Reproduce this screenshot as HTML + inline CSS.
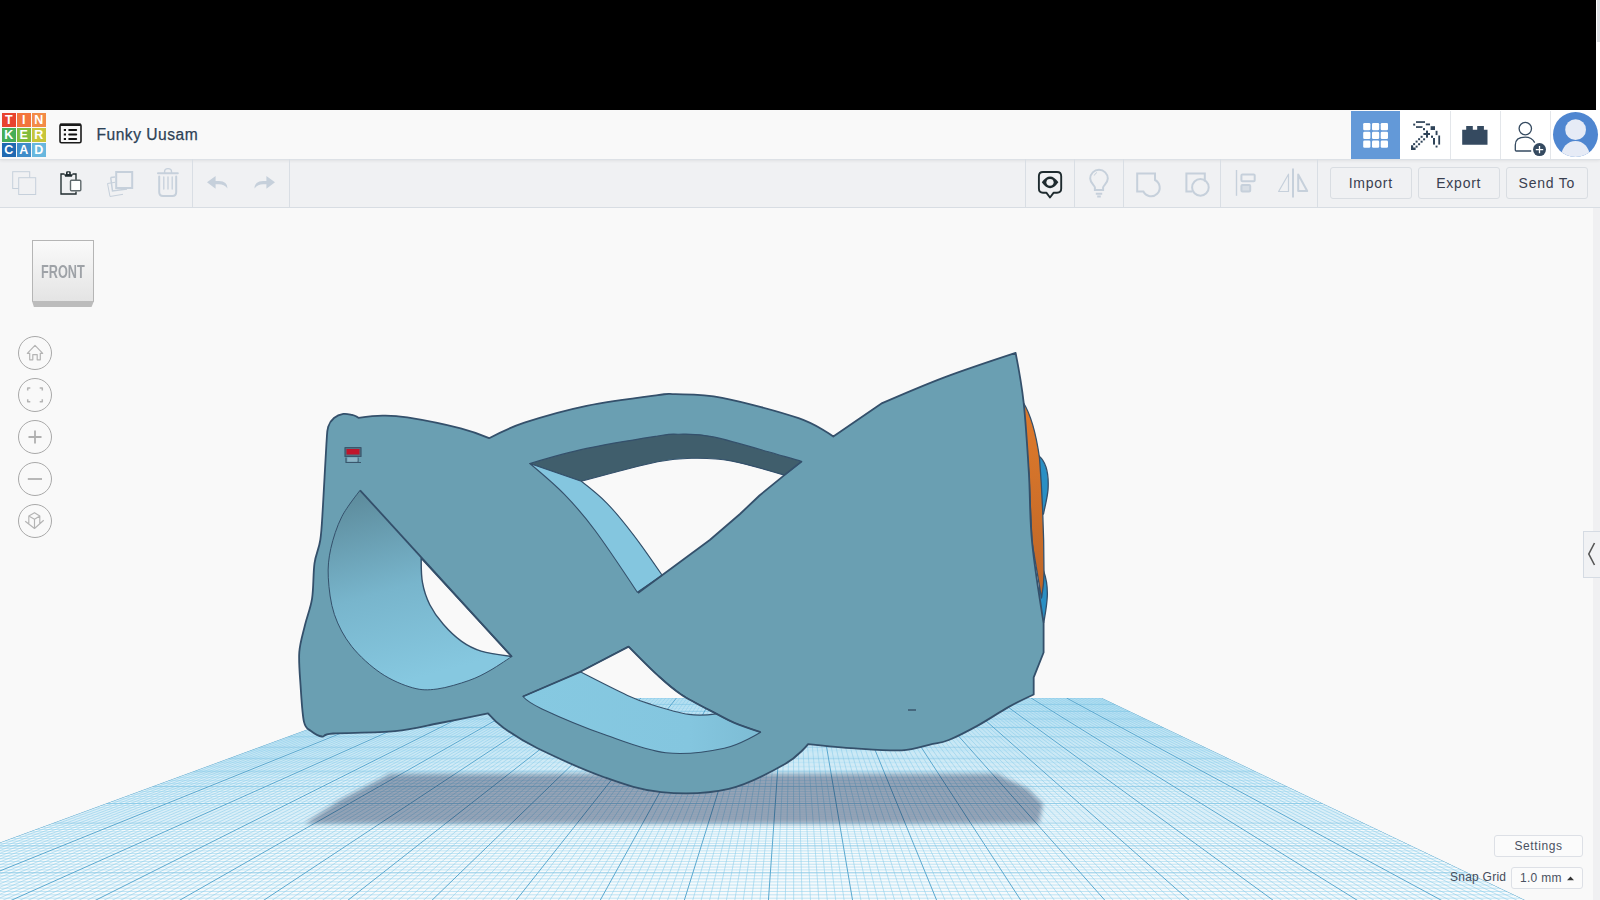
<!DOCTYPE html>
<html><head><meta charset="utf-8">
<style>
*{box-sizing:border-box;margin:0;padding:0}
html,body{width:1600px;height:900px;overflow:hidden;background:#f9f9f9;font-family:"Liberation Sans",sans-serif}
#top{position:absolute;left:0;top:0;width:1596px;height:110px;background:#000}
#sb{position:absolute;left:1596px;top:0;width:4px;height:110px;background:#fff}
#sbt{position:absolute;left:1597px;top:0;width:3px;height:42px;background:#dfe1e5}
#hdr{position:absolute;left:0;top:110px;width:1600px;height:50px;background:#f9f9f9;border-bottom:1px solid #dde1e6;box-shadow:0 1px 3px rgba(0,0,0,0.07)}
#hdrw{position:absolute;left:1400px;top:110px;width:200px;height:49px;background:#fff}
#tb{position:absolute;left:0;top:160px;width:1600px;height:48px;background:#f0f1f3;border-bottom:1px solid #d8dde3}
.abs{position:absolute}
.logo{position:absolute;left:2px;top:113px;width:44px;height:44px}
.tile{position:absolute;width:13.5px;height:13.5px;color:#fff;font:bold 12.5px/14px "Liberation Sans",sans-serif;text-align:center}
#title{position:absolute;left:96.5px;top:125px;font-size:15.6px;line-height:20px;color:#2d4256;letter-spacing:0.5px;-webkit-text-stroke:0.25px #2d4256}
.vdiv{position:absolute;top:159px;width:1px;height:48px;background:#d9dee4}
.hdiv{position:absolute;top:111px;width:1px;height:48px;background:#e3e6ea}
.btn{position:absolute;top:167px;height:32px;width:81.5px;border:1px solid #d9dde2;border-radius:3px;background:#f0f1f3;font-size:14px;color:#394050;text-align:center;line-height:31px;letter-spacing:0.75px}
.nav{position:absolute;left:18px;width:34px;height:34px;border:1px solid #a9a9a9;border-radius:50%;background:#f9f9f9}
#cube{position:absolute;left:32px;top:240px;width:62px;height:62px;border:1px solid #b5b5b5;background:linear-gradient(#fafafa,#e4e4e4)}
#cubesh{position:absolute;left:32px;top:301px;width:62px;height:6px;background:#bcbcbc;clip-path:polygon(0 0,100% 0,96% 100%,3% 100%)}
#cubetxt{position:absolute;left:41.2px;top:261.5px;font:bold 17.5px "Liberation Sans",sans-serif;color:#9ea2a7;transform-origin:0 0;transform:scaleX(0.725)}
#rstrip{position:absolute;left:1593px;top:208px;width:7px;height:692px;background:#f0f0f2}
#tab{position:absolute;left:1583px;top:531px;width:17px;height:47px;background:#f1f2f4;border:1px solid #d5dbe3;border-right:none}
#settings{position:absolute;left:1494px;top:835px;width:89px;height:22px;border:1px solid #dde0e6;border-radius:3px;background:#fbfbfb;font-size:12px;color:#4a5161;text-align:center;line-height:20px;letter-spacing:0.6px}
#snapbox{position:absolute;left:1511px;top:867px;width:72px;height:22px;border:1px solid #dde0e6;border-radius:3px;background:#fbfbfb;font-size:12px;color:#4a5161;line-height:20px;padding-left:8px;letter-spacing:0.3px}
#snaplbl{position:absolute;left:1450px;top:870px;font-size:12px;color:#454c5a;letter-spacing:0.25px}
</style></head><body>
<svg class="abs" style="left:0;top:0" width="1600" height="900" viewBox="0 0 1600 900">
<defs>
<clipPath id="gclip"><polygon points="392.7,698 1102,698 1535.5,905 -169.9,905"/></clipPath>
<filter id="blur3" x="-10%" y="-30%" width="120%" height="160%"><feGaussianBlur stdDeviation="2.2"/></filter>
<linearGradient id="cone" x1="0" y1="0" x2="0.25" y2="1"><stop offset="0" stop-color="#5a8797"/><stop offset="0.55" stop-color="#78b5cc"/><stop offset="1" stop-color="#86c8e0"/></linearGradient>
<linearGradient id="band2" x1="0" y1="0" x2="1" y2="0"><stop offset="0" stop-color="#86c9e1"/><stop offset="0.7" stop-color="#84c6df"/><stop offset="1" stop-color="#7dbcd4"/></linearGradient>
<linearGradient id="orng" x1="0" y1="0" x2="0" y2="1"><stop offset="0" stop-color="#e07b2c"/><stop offset="1" stop-color="#bd6527"/></linearGradient>
</defs>
<g id="grid" clip-path="url(#gclip)">
<polygon points="392.7,698 1102,698 1535.5,905 -169.9,905" fill="#f6fafc"/>
<path d="M391.18 698.56H1103.17M389.49 699.18H1104.48M387.78 699.81H1105.79M386.06 700.45H1107.12M384.32 701.08H1108.46M382.57 701.73H1109.81M380.80 702.38H1111.17M379.02 703.03H1112.54M377.23 703.70H1113.92M373.58 705.04H1116.73M371.74 705.71H1118.15M369.88 706.40H1119.59M368.00 707.09H1121.03M366.11 707.79H1122.49M364.20 708.49H1123.96M362.27 709.20H1125.45M360.32 709.92H1126.95M358.36 710.64H1128.46M354.38 712.10H1131.53M352.36 712.85H1133.08M350.33 713.60H1134.65M348.27 714.35H1136.23M346.20 715.11H1137.83M344.11 715.89H1139.45M341.99 716.66H1141.07M339.86 717.45H1142.72M337.71 718.24H1144.38M333.34 719.85H1147.74M331.12 720.66H1149.45M328.88 721.49H1151.18M326.62 722.32H1152.92M324.34 723.16H1154.68M322.04 724.01H1156.45M319.71 724.86H1158.24M317.36 725.73H1160.05M314.99 726.60H1161.88M310.17 728.37H1165.59M307.73 729.27H1167.48M305.26 730.18H1169.38M302.76 731.10H1171.31M300.24 732.03H1173.25M297.69 732.97H1175.21M295.12 733.91H1177.19M292.52 734.87H1179.20M289.89 735.84H1181.22M284.55 737.80H1185.34M281.84 738.80H1187.43M279.10 739.81H1189.54M276.33 740.83H1191.68M273.53 741.86H1193.83M270.69 742.90H1196.02M267.83 743.96H1198.22M264.94 745.02H1200.45M262.01 746.10H1202.71M256.06 748.29H1207.29M253.04 749.40H1209.62M249.98 750.53H1211.98M246.88 751.67H1214.37M243.75 752.82H1216.78M240.58 753.99H1219.22M237.38 755.17H1221.69M234.14 756.36H1224.18M230.86 757.56H1226.71M224.19 760.02H1231.85M220.79 761.27H1234.47M217.36 762.54H1237.12M213.88 763.82H1239.80M210.36 765.11H1242.51M206.79 766.42H1245.26M203.19 767.75H1248.04M199.53 769.10H1250.85M195.84 770.46H1253.70M188.30 773.23H1259.51M184.46 774.64H1262.47M180.57 776.08H1265.47M176.63 777.52H1268.50M172.64 778.99H1271.58M168.60 780.48H1274.69M164.51 781.99H1277.84M160.36 783.51H1281.04M156.15 785.06H1284.28M147.58 788.22H1290.89M143.20 789.83H1294.26M138.77 791.46H1297.68M134.27 793.12H1301.15M129.71 794.79H1304.66M125.09 796.50H1308.22M120.40 798.22H1311.83M115.65 799.97H1315.49M110.83 801.75H1319.21M100.98 805.37H1326.80M95.94 807.22H1330.68M90.84 809.10H1334.61M85.66 811.01H1338.61M80.40 812.94H1342.66M75.06 814.91H1346.77M69.64 816.90H1350.95M64.14 818.93H1355.19M58.56 820.98H1359.49M47.13 825.19H1368.30M41.28 827.34H1372.80M35.34 829.53H1377.38M29.30 831.75H1382.03M23.17 834.01H1386.76M16.93 836.30H1391.56M10.60 838.63H1396.44M4.16 841.00H1401.41M-2.38 843.41H1406.45M-15.81 848.35H1416.79M-22.69 850.89H1422.10M-29.69 853.46H1427.49M-36.81 856.08H1432.98M-44.06 858.75H1438.56M-51.43 861.46H1444.24M-58.93 864.23H1450.03M-66.57 867.04H1455.91M-74.35 869.90H1461.91M-90.33 875.78H1474.22M-98.55 878.81H1480.55M-106.92 881.89H1487.00M-115.44 885.03H1493.57M-124.13 888.22H1500.27M-132.99 891.48H1507.10M-142.02 894.81H1514.06M-151.23 898.20H1521.15M-160.63 901.65H1528.39" stroke="#8fd0ec" stroke-opacity="0.6" stroke-width="0.9" fill="none"/>
<path d="M396.25 698.0L-161.19 905M399.79 698.0L-152.66 905M403.34 698.0L-144.14 905M406.89 698.0L-135.61 905M410.43 698.0L-127.09 905M413.98 698.0L-118.56 905M417.53 698.0L-110.04 905M421.07 698.0L-101.51 905M424.62 698.0L-92.99 905M431.71 698.0L-75.93 905M435.26 698.0L-67.41 905M438.80 698.0L-58.88 905M442.35 698.0L-50.36 905M445.90 698.0L-41.83 905M449.44 698.0L-33.31 905M452.99 698.0L-24.78 905M456.54 698.0L-16.26 905M460.08 698.0L-7.73 905M467.18 698.0L9.32 905M470.72 698.0L17.85 905M474.27 698.0L26.37 905M477.82 698.0L34.90 905M481.36 698.0L43.42 905M484.91 698.0L51.95 905M488.46 698.0L60.47 905M492.00 698.0L69.00 905M495.55 698.0L77.53 905M502.64 698.0L94.58 905M506.19 698.0L103.10 905M509.73 698.0L111.63 905M513.28 698.0L120.15 905M516.83 698.0L128.68 905M520.37 698.0L137.20 905M523.92 698.0L145.73 905M527.47 698.0L154.26 905M531.01 698.0L162.78 905M538.11 698.0L179.83 905M541.65 698.0L188.36 905M545.20 698.0L196.88 905M548.75 698.0L205.41 905M552.29 698.0L213.93 905M555.84 698.0L222.46 905M559.39 698.0L230.99 905M562.93 698.0L239.51 905M566.48 698.0L248.04 905M573.57 698.0L265.09 905M577.12 698.0L273.61 905M580.66 698.0L282.14 905M584.21 698.0L290.66 905M587.76 698.0L299.19 905M591.30 698.0L307.72 905M594.85 698.0L316.24 905M598.40 698.0L324.77 905M601.94 698.0L333.29 905M609.04 698.0L350.34 905M612.58 698.0L358.87 905M616.13 698.0L367.39 905M619.68 698.0L375.92 905M623.22 698.0L384.45 905M626.77 698.0L392.97 905M630.32 698.0L401.50 905M633.86 698.0L410.02 905M637.41 698.0L418.55 905M644.50 698.0L435.60 905M648.05 698.0L444.12 905M651.59 698.0L452.65 905M655.14 698.0L461.18 905M658.69 698.0L469.70 905M662.23 698.0L478.23 905M665.78 698.0L486.75 905M669.33 698.0L495.28 905M672.87 698.0L503.80 905M679.97 698.0L520.85 905M683.51 698.0L529.38 905M687.06 698.0L537.91 905M690.61 698.0L546.43 905M694.15 698.0L554.96 905M697.70 698.0L563.48 905M701.25 698.0L572.01 905M704.79 698.0L580.53 905M708.34 698.0L589.06 905M715.43 698.0L606.11 905M718.98 698.0L614.64 905M722.52 698.0L623.16 905M726.07 698.0L631.69 905M729.62 698.0L640.21 905M733.16 698.0L648.74 905M736.71 698.0L657.26 905M740.26 698.0L665.79 905M743.80 698.0L674.31 905M750.90 698.0L691.36 905M754.44 698.0L699.89 905M757.99 698.0L708.42 905M761.54 698.0L716.94 905M765.08 698.0L725.47 905M768.63 698.0L733.99 905M772.18 698.0L742.52 905M775.72 698.0L751.04 905M779.27 698.0L759.57 905M786.36 698.0L776.62 905M789.91 698.0L785.15 905M793.45 698.0L793.67 905M797.00 698.0L802.20 905M800.55 698.0L810.72 905M804.09 698.0L819.25 905M807.64 698.0L827.77 905M811.19 698.0L836.30 905M814.73 698.0L844.82 905M821.83 698.0L861.88 905M825.37 698.0L870.40 905M828.92 698.0L878.93 905M832.47 698.0L887.45 905M836.01 698.0L895.98 905M839.56 698.0L904.50 905M843.11 698.0L913.03 905M846.65 698.0L921.55 905M850.20 698.0L930.08 905M857.29 698.0L947.13 905M860.84 698.0L955.66 905M864.38 698.0L964.18 905M867.93 698.0L972.71 905M871.48 698.0L981.23 905M875.02 698.0L989.76 905M878.57 698.0L998.28 905M882.12 698.0L1006.81 905M885.66 698.0L1015.34 905M892.76 698.0L1032.39 905M896.30 698.0L1040.91 905M899.85 698.0L1049.44 905M903.40 698.0L1057.96 905M906.94 698.0L1066.49 905M910.49 698.0L1075.01 905M914.04 698.0L1083.54 905M917.58 698.0L1092.07 905M921.13 698.0L1100.59 905M928.22 698.0L1117.64 905M931.77 698.0L1126.17 905M935.31 698.0L1134.69 905M938.86 698.0L1143.22 905M942.41 698.0L1151.74 905M945.95 698.0L1160.27 905M949.50 698.0L1168.80 905M953.05 698.0L1177.32 905M956.59 698.0L1185.85 905M963.69 698.0L1202.90 905M967.23 698.0L1211.42 905M970.78 698.0L1219.95 905M974.33 698.0L1228.47 905M977.87 698.0L1237.00 905M981.42 698.0L1245.53 905M984.97 698.0L1254.05 905M988.51 698.0L1262.58 905M992.06 698.0L1271.10 905M999.15 698.0L1288.15 905M1002.70 698.0L1296.68 905M1006.24 698.0L1305.20 905M1009.79 698.0L1313.73 905M1013.34 698.0L1322.26 905M1016.88 698.0L1330.78 905M1020.43 698.0L1339.31 905M1023.98 698.0L1347.83 905M1027.52 698.0L1356.36 905M1034.62 698.0L1373.41 905M1038.16 698.0L1381.93 905M1041.71 698.0L1390.46 905M1045.26 698.0L1398.98 905M1048.80 698.0L1407.51 905M1052.35 698.0L1416.04 905M1055.90 698.0L1424.56 905M1059.44 698.0L1433.09 905M1062.99 698.0L1441.61 905M1070.08 698.0L1458.66 905M1073.63 698.0L1467.19 905M1077.17 698.0L1475.71 905M1080.72 698.0L1484.24 905M1084.27 698.0L1492.77 905M1087.81 698.0L1501.29 905M1091.36 698.0L1509.82 905M1094.91 698.0L1518.34 905M1098.45 698.0L1526.87 905" stroke="#8cceea" stroke-opacity="0.65" stroke-width="0.9" fill="none"/>
<path d="M392.86 697.94H1101.88M375.41 704.36H1115.32M356.38 711.37H1129.99M335.53 719.04H1146.05M312.59 727.48H1163.73M287.24 736.82H1183.27M259.05 747.19H1204.99M227.55 758.79H1229.27M192.09 771.84H1256.59M151.89 786.63H1287.56M105.94 803.54H1322.98M52.89 823.07H1363.86M-9.04 845.86H1411.58M-82.27 872.81H1468.01" stroke="#84c7e5" stroke-width="0.9" fill="none"/>
<path d="M392.70 698.0L-169.71 905M428.16 698.0L-84.46 905M463.63 698.0L0.80 905M499.09 698.0L86.05 905M534.56 698.0L171.31 905M570.02 698.0L256.56 905M605.49 698.0L341.82 905M640.95 698.0L427.07 905M676.42 698.0L512.33 905M711.88 698.0L597.58 905M747.35 698.0L682.84 905M782.82 698.0L768.09 905M818.28 698.0L853.35 905M853.75 698.0L938.61 905M889.21 698.0L1023.86 905M924.67 698.0L1109.12 905M960.14 698.0L1194.37 905M995.61 698.0L1279.63 905M1031.07 698.0L1364.88 905M1066.54 698.0L1450.14 905M1102.00 698.0L1535.39 905" stroke="#5aa8cf" stroke-width="1" fill="none"/>
<polygon points="390,774 997,774 1028,789 1043,804 1039,823.5 305,823.5 340,800" fill="#aaadbb" filter="url(#blur3)" style="mix-blend-mode:multiply"/>
</g>
<g id="obj" stroke-linejoin="round">
<path d="M1039,456 C1046,462 1049,475 1048,490 C1047,500 1044.5,508 1043.5,514 L1038,514 Z M1043.6,571 C1046.5,579 1047.6,588 1047.3,596 C1046.9,606 1045,615 1043.8,622.5 L1037,600 Z" fill="#2a8fc4" stroke="#34506b" stroke-width="1.3"/>
<path d="M1023,402 C1033,418 1037,440 1039.5,458 C1042,490 1044,540 1044,573 C1044,585 1042.5,592 1041.5,598 L1032,542 L1028.9,473.3 Z" fill="url(#orng)" stroke="#34506b" stroke-width="1.3"/>
<path fill="#6a9fb2" stroke="#34506b" stroke-width="1.8" d="M328.2,426.7C329.5,422.3 331.5,420.1 334.0,418.0C336.5,415.9 340.3,414.4 343.3,413.9C346.3,413.4 349.8,414.4 352.0,414.8C354.2,415.2 356.5,416.5 356.5,416.5L358.4,417.8C358.4,417.8 374.2,415.7 382.4,415.6C390.5,415.5 394.2,415.3 407.3,417.4C420.4,419.5 447.1,424.9 460.7,428.4C474.3,431.9 489.1,438.2 489.1,438.2C489.1,438.2 508.1,428.1 524.4,422.7C540.6,417.3 564.4,410.4 586.6,405.8C608.8,401.2 642.9,397.0 657.7,395.1C672.5,393.2 664.8,393.8 675.5,394.2C686.2,394.6 701.7,393.8 722.2,397.8C742.7,401.8 780.1,411.8 798.6,418.2C817.1,424.6 833.3,436.5 833.3,436.5L882.2,403.1C882.2,403.1 922.2,385.7 944.4,377.3C966.6,368.9 1015.6,352.8 1015.6,352.8C1015.6,352.8 1021.4,382.1 1023.6,402.2C1025.8,422.3 1027.5,450.0 1028.9,473.3C1030.3,496.6 1029.6,517.2 1032.1,542.2C1034.5,567.2 1043.6,623.0 1043.6,623.0L1043.6,652.5L1033.7,677.4L1033.7,694.5C1033.7,694.5 1018.1,701.7 1008.8,706.9C999.5,712.1 987.7,720.1 977.7,725.6C967.7,731.1 956.7,736.8 948.8,740.0C940.8,743.2 937.8,742.9 930.0,744.6C922.2,746.3 914.4,749.7 901.9,750.3C889.4,750.9 870.6,749.4 855.0,748.4C839.4,747.4 808.1,744.1 808.1,744.1C808.1,744.1 798.2,756.5 785.0,764.0C771.8,771.5 749.4,784.1 728.8,788.8C708.2,793.5 681.9,794.0 661.3,792.1C640.7,790.2 625.6,784.8 605.0,777.5C584.4,770.2 554.4,756.5 537.5,748.3C520.6,740.0 512.0,733.8 503.8,728.0C495.6,722.2 488.0,713.4 488.0,713.4C488.0,713.4 455.5,720.0 440.0,723.0C424.5,726.0 412.8,729.4 395.0,731.1C377.2,732.9 345.3,732.6 333.1,733.5C320.9,734.4 325.7,736.9 322.0,736.5C318.3,736.1 314.0,733.4 311.0,731.0C308.0,728.6 305.8,729.6 304.0,721.9C302.2,714.2 301.3,696.2 300.5,684.6C299.7,673.0 298.6,661.9 299.3,652.0C300.1,642.1 302.9,634.0 305.0,625.0C307.1,616.0 310.5,608.6 312.1,598.3C313.7,588.0 313.1,573.0 314.5,563.3C315.9,553.6 318.9,549.4 320.3,540.0C321.7,530.6 321.9,522.6 322.9,506.7C323.9,490.8 325.5,457.7 326.4,444.4C327.3,431.1 326.9,431.1 328.2,426.7Z"/>
<path fill="url(#cone)" stroke="#34506b" stroke-width="1" d="M360.1,490.3L511.7,656.5C511.7,656.5 497.1,666.5 490.0,670.5C482.9,674.5 477.7,677.4 468.9,680.5C460.1,683.6 446.5,687.8 437.1,689.0C427.7,690.2 422.1,690.4 412.7,687.8C403.3,685.2 391.1,680.1 380.9,673.2C370.7,666.3 359.4,656.1 351.6,646.3C343.9,636.5 338.3,625.9 334.4,614.5C330.5,603.1 328.9,588.8 328.3,577.8C327.7,566.8 328.6,558.7 330.8,548.5C333.1,538.3 336.9,526.4 341.8,516.7C346.7,507.0 360.1,490.3 360.1,490.3Z"/>
<path fill="#f9f9f9" stroke="#34506b" stroke-width="1.4" d="M421.2,558.2L511.7,656.5C511.7,656.5 489.5,653.6 481.1,651.1C472.8,648.6 467.9,645.9 461.6,641.4C455.3,636.9 448.6,630.4 443.3,624.3C438.0,618.2 433.3,611.6 429.8,604.7C426.3,597.8 423.9,590.5 422.5,582.7C421.1,575.0 421.2,558.2 421.2,558.2Z"/>
<path fill="none" stroke="#34506b" stroke-width="1.8" d="M360.1,490.3 L511.7,656.5"/>
<path fill="#f9f9f9" d="M581.3,481.3C581.3,481.3 607.3,473.3 620.0,470.0C632.7,466.7 645.1,463.7 657.7,461.7C670.3,459.7 683.3,458.3 695.5,458.2C707.7,458.1 716.3,458.1 731.1,460.9C745.9,463.7 784.4,475.1 784.4,475.1C784.4,475.1 766.9,489.0 759.5,495.5C752.1,502.0 748.3,506.6 740.0,514.0C731.7,521.4 722.8,529.8 709.8,540.0C696.8,550.2 662.2,575.3 662.2,575.3C662.2,575.3 643.0,547.3 633.8,535.3C624.6,523.3 615.8,512.3 607.0,503.3C598.2,494.3 581.3,481.3 581.3,481.3Z"/>
<path fill="#405e6c" stroke="#34506b" stroke-width="1.1" d="M529.8,463.5C529.8,463.5 565.3,453.0 586.6,448.4C607.9,443.8 642.5,438.4 657.7,436.0C672.9,433.6 668.5,434.1 677.8,434.2C687.1,434.3 695.5,433.2 713.3,436.9C731.1,440.6 769.6,452.3 784.4,456.4C799.1,460.5 801.8,461.4 801.8,461.4L784.4,475.1C784.4,475.1 745.9,463.7 731.1,460.9C716.3,458.1 707.7,458.1 695.5,458.2C683.3,458.3 676.7,457.8 657.7,461.7C638.7,465.6 581.3,481.3 581.3,481.3L529.8,463.5Z"/>
<path fill="#84c6df" stroke="#34506b" stroke-width="1.1" d="M529.8,463.5L581.3,481.3C581.3,481.3 598.2,494.3 607.0,503.3C615.8,512.3 624.6,523.3 633.8,535.3C643.0,547.3 662.2,575.3 662.2,575.3L637.3,592.2C637.3,592.2 606.9,546.3 594.7,530.0C582.6,513.7 575.2,505.5 564.4,494.4C553.6,483.3 529.8,463.5 529.8,463.5Z"/>
<path fill="none" stroke="#34506b" stroke-width="1.8" d="M801.8,461.4 L784.4,475.1 L759.5,495.5 L740,514 L709.8,540 L638,593"/>
<path fill="url(#band2)" stroke="#34506b" stroke-width="1.1" d="M628.6,646.6C628.6,646.6 648.0,666.4 656.7,674.4C665.5,682.4 671.1,687.8 681.1,694.4C691.1,701.0 707.8,709.2 716.7,713.9C725.6,718.6 727.1,719.8 734.4,722.8C741.7,725.8 760.6,732.2 760.6,732.2C760.6,732.2 740.1,744.9 724.3,748.3C708.5,751.7 685.7,755.0 665.8,752.8C645.9,750.5 625.6,742.1 605.0,734.8C584.4,727.5 555.7,715.3 542.0,708.9C528.3,702.5 522.9,696.5 522.9,696.5L580.3,671.8L628.6,646.6Z"/>
<clipPath id="hole3"><path d="M628.6,646.6C628.6,646.6 648.0,666.4 656.7,674.4C665.5,682.4 671.1,687.8 681.1,694.4C691.1,701.0 716.7,713.9 716.7,713.9C716.7,713.9 699.8,716.0 688.9,714.4C678.0,712.8 661.3,707.6 651.1,704.4C640.9,701.2 639.3,700.8 627.5,695.4C615.7,690.0 580.3,671.8 580.3,671.8L628.6,646.6Z"/></clipPath><path fill="#f9f9f9" d="M628.6,646.6C628.6,646.6 648.0,666.4 656.7,674.4C665.5,682.4 671.1,687.8 681.1,694.4C691.1,701.0 716.7,713.9 716.7,713.9C716.7,713.9 699.8,716.0 688.9,714.4C678.0,712.8 661.3,707.6 651.1,704.4C640.9,701.2 639.3,700.8 627.5,695.4C615.7,690.0 580.3,671.8 580.3,671.8L628.6,646.6Z"/><use href="#grid" clip-path="url(#hole3)"/><path fill="none" stroke="#34506b" stroke-width="1.1" d="M628.6,646.6C628.6,646.6 648.0,666.4 656.7,674.4C665.5,682.4 671.1,687.8 681.1,694.4C691.1,701.0 716.7,713.9 716.7,713.9C716.7,713.9 699.8,716.0 688.9,714.4C678.0,712.8 661.3,707.6 651.1,704.4C640.9,701.2 639.3,700.8 627.5,695.4C615.7,690.0 580.3,671.8 580.3,671.8L628.6,646.6Z"/>
<path fill="none" stroke="#34506b" stroke-width="1.8" d="M522.9,696.5L580.3,671.8L628.6,646.6C628.6,646.6 648.0,666.4 656.7,674.4C665.5,682.4 671.1,687.8 681.1,694.4C691.1,701.0 707.8,709.2 716.7,713.9C725.6,718.6 727.1,719.8 734.4,722.8C741.7,725.8 760.6,732.2 760.6,732.2"/>
<rect x="345" y="447.5" width="16" height="9" fill="#4f6f80" stroke="#3a566c" stroke-width="1.2"/>
<rect x="346.5" y="449" width="13" height="5.5" fill="#c0142a"/>
<path d="M346,457.5 V462.5 H361 M358,457.5 V462" fill="none" stroke="#3a566c" stroke-width="1.2"/>
<rect x="347.5" y="457.5" width="10" height="4" fill="#8db3c4"/>
<path d="M908,710 h8" stroke="#3a566c" stroke-width="1.5"/>
</g>
</svg>
<div id="top"></div><div id="sb"></div><div id="sbt"></div>
<div id="tb"></div>
<div id="hdr"></div><div id="hdrw"></div>
<div class="logo">
 <div class="tile" style="left:0;top:0;background:#e8432e">T</div>
 <div class="tile" style="left:15px;top:0;background:#f3743c">I</div>
 <div class="tile" style="left:30px;top:0;background:#f38b47">N</div>
 <div class="tile" style="left:0;top:15px;background:#46ad57">K</div>
 <div class="tile" style="left:15px;top:15px;background:#81bb3b">E</div>
 <div class="tile" style="left:30px;top:15px;background:#c7c53a">R</div>
 <div class="tile" style="left:0;top:30px;background:#1f69b1">C</div>
 <div class="tile" style="left:15px;top:30px;background:#3f8dc9">A</div>
 <div class="tile" style="left:30px;top:30px;background:#68b7de">D</div>
</div>
<div id="title">Funky Uusam</div>
<div class="vdiv" style="left:192px"></div>
<div class="vdiv" style="left:289px"></div>
<div class="vdiv" style="left:1025px"></div>
<div class="vdiv" style="left:1074px"></div>
<div class="vdiv" style="left:1123px"></div>
<div class="vdiv" style="left:1220px"></div>
<div class="vdiv" style="left:1317px"></div>
<div class="abs" style="left:1351px;top:111px;width:49px;height:48px;background:#6399d8"></div>
<div class="hdiv" style="left:1450px"></div>
<div class="hdiv" style="left:1500px"></div>
<div class="hdiv" style="left:1550px"></div>
<div class="btn" style="left:1330px">Import</div>
<div class="btn" style="left:1418px">Export</div>
<div class="btn" style="left:1506px">Send To</div>
<div id="cube"></div><div id="cubesh"></div><div id="cubetxt">FRONT</div>
<div class="nav" style="top:336px"></div>
<div class="nav" style="top:378px"></div>
<div class="nav" style="top:420px"></div>
<div class="nav" style="top:462px"></div>
<div class="nav" style="top:504px"></div>
<div id="rstrip"></div>
<div id="tab"></div>
<div id="settings">Settings</div>
<div id="snaplbl">Snap Grid</div>
<div id="snapbox">1.0 mm</div>
<svg class="abs" style="left:0;top:0;pointer-events:none" width="1600" height="900" viewBox="0 0 1600 900">
<!-- right header cells white bg -->
<!-- list icon -->
<g fill="none" stroke="#1b1b1b">
 <rect x="60" y="124.2" width="21" height="18.6" rx="1.5" stroke-width="1.6"/>
 <path d="M60 124.8H81" stroke-width="2.4"/>
</g>
<g fill="#111">
 <rect x="63.8" y="129" width="2.2" height="2"/><rect x="63.8" y="133.5" width="2.2" height="2"/><rect x="63.8" y="138" width="2.2" height="2"/>
 <rect x="68.2" y="129" width="9" height="2" rx="1"/><rect x="68.2" y="133.5" width="9" height="2" rx="1"/><rect x="68.2" y="138" width="9" height="2" rx="1"/>
</g>
<!-- copy -->
<g fill="#f0f1f3" stroke="#c6d0db" stroke-width="1">
 <rect x="12.7" y="171.7" width="17" height="16.8"/>
 <rect x="18.7" y="177.7" width="17" height="16.8"/>
</g>
<!-- paste -->
<g fill="none" stroke="#1f2b2f" stroke-width="1.35">
 <path d="M64.5 174H61V194H76V191.5M76 180V174H72.5"/>
</g>
<path d="M64 174.2 H73 L71.8 176.8 H65.2 Z" fill="#1f2b2f"/>
<path d="M66 175 V172.6 Q66 171.2 67.4 171.2 H69.4 Q70.8 171.2 70.8 172.6 V175 Z" fill="#1f2b2f"/>
<circle cx="68.4" cy="173.2" r="0.9" fill="#f0f1f3"/>
<rect x="70.5" y="180.2" width="10.3" height="10.6" rx="1" fill="#fff" stroke="#5e686b" stroke-width="1.4"/>
<!-- duplicate -->
<g fill="none" stroke="#c6d0db">
 <path d="M107.5 183.5 L115 182.3 M107.5 183.5 L110 196.5 L123 194.3" stroke-width="1"/>
 <path d="M110.7 177.5 L115 176.9 M110.7 177.5 L112.5 191 L127 188.9" stroke-width="1.5"/>
 <rect x="116.2" y="172" width="16" height="16" stroke-width="2"/>
</g>
<!-- trash -->
<g fill="none" stroke="#c6d0db" stroke-width="2" stroke-linecap="round">
 <path d="M158 173.2H177.8"/>
 <path d="M164.6 173 V171.5 Q164.6 168.6 168 168.6 Q171.5 168.6 171.5 171.5 V173" stroke-width="1.4"/>
 <path d="M159.2 176.5 V192 Q159.2 196 163 196 H172.5 Q176.2 196 176.2 192 V176.5"/>
 <path d="M163.8 177 V189 M168 177 V189 M172.2 177 V189" stroke-width="1.3"/>
</g>
<!-- undo / redo -->
<g fill="#c6d0db">
 <path d="M207 182.3 L215.6 176 V181 H219 Q227.5 181 227.5 188.5 Q224 184.3 219 184.3 H215.6 V188.8 Z"/>
 <path d="M275 182.3 L266.4 176 V181 H263 Q254.5 181 254.5 188.5 Q258 184.3 263 184.3 H266.4 V188.8 Z"/>
</g>
<!-- eye bubble -->
<g fill="none" stroke="#1f2b2f" stroke-width="1.9" stroke-linejoin="round">
 <path d="M1043 172 H1057 Q1061.2 172 1061.2 176.2 V188.5 Q1061.2 192.7 1057 192.7 H1053.7 L1050 197.5 L1046.3 192.7 H1043 Q1038.9 192.7 1038.9 188.5 V176.2 Q1038.9 172 1043 172 Z"/>
</g>
<path d="M1041.8 182.3 Q1050 170.5 1058.4 182.3 Q1050 194 1041.8 182.3 Z" fill="#1f2b2f"/>
<ellipse cx="1050" cy="182.3" rx="3.6" ry="3.4" fill="#f0f1f3"/>
<!-- bulb -->
<g fill="none" stroke="#c6d0db" stroke-width="2">
 <path d="M1094.9 190 V187.6 C1094.9 185.6 1090.2 183.2 1090.2 178.6 A8.8 8.8 0 0 1 1107.8 178.6 C1107.8 183.2 1103.1 185.6 1103.1 187.6 V190 Z"/>
 <path d="M1095.8 193.8 H1102.2 M1097.2 196.6 H1100.8"/>
 <path d="M1094.3 175.5 Q1095 173.3 1097 172.5" stroke-width="1"/>
</g>
<!-- group / ungroup -->
<g fill="none" stroke="#c6d0db" stroke-width="2">
 <path d="M1155 180 V173.4 H1137.2 V191.5 H1143.4 A8.6 8.6 0 1 0 1155 180 Z"/>
 <path d="M1204.8 181.5 V173.4 H1186.4 V191.5 H1192.5"/>
 <circle cx="1200.4" cy="187.4" r="8.3"/>
</g>
<!-- align -->
<g fill="none" stroke="#c6d0db">
 <path d="M1236.5 170 V195.8" stroke-width="1.4"/>
 <rect x="1241.4" y="174.6" width="13.3" height="6.6" rx="1" stroke-width="2"/>
 <rect x="1241.4" y="185.1" width="8.8" height="6.3" rx="1" stroke-width="2" fill="#d8dee5"/>
</g>
<!-- mirror -->
<g fill="none" stroke="#c6d0db" stroke-linejoin="round">
 <path d="M1293 168.6 V197.6" stroke-width="2"/>
 <path d="M1288.5 174.2 L1278.6 191.5 H1288.5 Z" stroke-width="1.2"/>
 <path d="M1298.2 174.5 L1307.2 191 H1298.2 Z" stroke-width="2"/>
</g>
<!-- grid icon white -->
<g fill="#fff">
 <rect x="1363.2" y="123" width="7.2" height="7.3" rx="1.3"/><rect x="1372" y="123" width="7.2" height="7.3" rx="1.3"/><rect x="1380.7" y="123" width="7.3" height="7.3" rx="1.3"/>
 <rect x="1363.2" y="131.8" width="7.2" height="7.2" rx="1.3"/><rect x="1372" y="131.8" width="7.2" height="7.2" rx="1.3"/><rect x="1380.7" y="131.8" width="7.3" height="7.2" rx="1.3"/>
 <rect x="1363.2" y="140.5" width="7.2" height="7.3" rx="1.3"/><rect x="1372" y="140.5" width="7.2" height="7.3" rx="1.3"/><rect x="1380.7" y="140.5" width="7.3" height="7.3" rx="1.3"/>
</g>
<!-- pickaxe -->
<g fill="#2f4358">
<rect x="1416" y="121.2" width="9" height="1.7"/><rect x="1413.2" y="123.6" width="2" height="2"/><rect x="1416" y="126.2" width="6.5" height="1.7"/><rect x="1425.8" y="123.5" width="4.2" height="1.8"/><rect x="1430.6" y="126.2" width="4.4" height="3.8"/><rect x="1423" y="128.1" width="2" height="2.1"/><rect x="1423.4" y="133" width="6.6" height="2"/><rect x="1426" y="130.6" width="2" height="7.1"/><rect x="1431" y="135.6" width="2" height="2.2"/><rect x="1435.6" y="130.8" width="1.9" height="4.3"/><rect x="1438.3" y="135.5" width="1.8" height="9.1"/><rect x="1433" y="138" width="2" height="6.6"/><rect x="1435.6" y="145.6" width="1.9" height="1.9"/><rect x="1420.6" y="135.8" width="2" height="2"/><rect x="1418.1" y="138.2" width="2" height="2"/><rect x="1415.6" y="140.6" width="2" height="2"/><rect x="1413.1" y="143.1" width="2" height="2"/><rect x="1423.1" y="138.3" width="2" height="2"/><rect x="1420.6" y="140.7" width="2" height="2"/><rect x="1418.1" y="143.2" width="2" height="2"/><rect x="1415.6" y="145.6" width="2" height="2"/><path d="M1411 145.2 H1413.2 V147.6 H1415.6 V150 H1411 Z"/>
</g>
<!-- brick -->
<path d="M1462.2 129.8 H1466.2 V126 H1472.8 V129.8 H1477.2 V126 H1483.9 V129.8 H1487.5 V144.8 H1462.2 Z" fill="#354a60"/>
<!-- user add -->
<g fill="none" stroke="#354a60" stroke-width="1.3">
 <circle cx="1525.3" cy="128.6" r="6.2"/>
 <path d="M1531.2 151 H1516.3 Q1515.3 151 1515.3 150 V145 Q1515.3 137.2 1525.3 137.2 Q1531.7 137.2 1534.7 142.6"/>
</g>
<circle cx="1539.5" cy="149.6" r="6.5" fill="#354a60"/>
<path d="M1539.5 146 V153.3 M1535.8 149.6 H1543.2" stroke="#fff" stroke-width="1.3"/>
<!-- avatar -->
<circle cx="1575.5" cy="134.5" r="22.5" fill="#4f86d0"/>
<clipPath id="avc"><circle cx="1575.5" cy="134.5" r="22.5"/></clipPath>
<g clip-path="url(#avc)" fill="#e6ebf6">
 <circle cx="1575.6" cy="129.7" r="10.4"/>
 <ellipse cx="1575.5" cy="155.5" rx="14" ry="14.5"/>
</g>
<!-- nav circles icons -->
<g fill="none" stroke="#b4b4b4" stroke-width="1.2" stroke-linejoin="round">
 <path d="M27.3 353.3 L35 345.4 L42.7 353.3 H40.3 V359.8 H37.2 V354.6 H32.8 V359.8 H29.7 V353.3 Z"/>
 <path d="M27.7 390.5 V388 H30.3 M39.7 388 H42.3 V390.5 M42.3 399.3 V401.8 H39.7 M30.3 401.8 H27.7 V399.3" stroke-width="1.5"/>
</g>
<g stroke="#b0b0b0" stroke-width="1.8">
 <path d="M28.5 437 H41.5 M35 430.5 V443.5"/>
 <path d="M27.8 479 H42"/>
</g>
<g fill="none" stroke="#b4b4b4" stroke-width="1.1" stroke-linejoin="round">
 <path d="M28.8 516 L34.5 512.7 L39.8 516 L34.5 519.2 Z M28.8 516 V523.5 M39.8 516 V523.5 M34.5 519.2 V528.5 M25.2 521.2 L34.5 528.5 L43.7 520.3" stroke-width="1.15"/>
</g>
<!-- tab chevron -->
<path d="M1594.5 543 L1588.8 554 L1594.5 565" fill="none" stroke="#555" stroke-width="1.6"/>
<!-- snap triangle -->
<path d="M1567 880.2 L1570.5 876.5 L1574 880.2 Z" fill="#333"/>
</svg>

</body></html>
